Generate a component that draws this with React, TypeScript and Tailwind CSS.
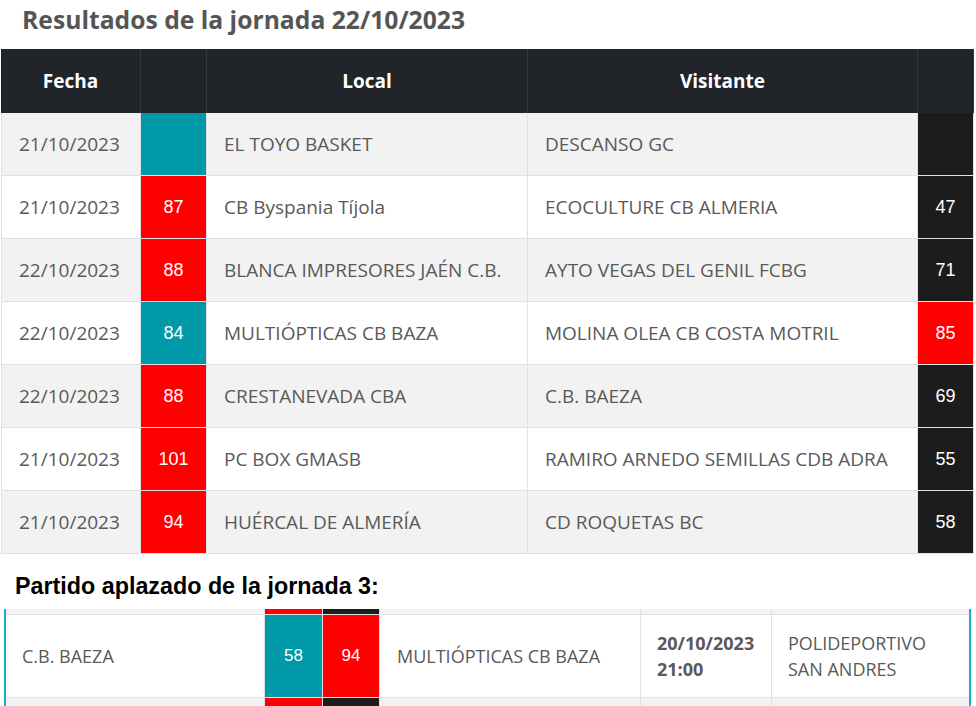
import React from 'react'

type Tone = 'teal' | 'red' | 'black'

interface Match {
  date: string
  localScore?: number
  local: string
  visitor: string
  visitorScore?: number
  localTone: Tone
  visitorTone: Tone
}

const toneClass: Record<Tone, string> = {
  teal: 'bg-[#0099a8]',
  red: 'bg-[#ff0000]',
  black: 'bg-[#1c1c1c]',
}

const matches: Match[] = [
  { date: '21/10/2023', local: 'EL TOYO BASKET', visitor: 'DESCANSO GC', localTone: 'teal', visitorTone: 'black' },
  { date: '21/10/2023', localScore: 87, local: 'CB Byspania Tíjola', visitor: 'ECOCULTURE CB ALMERIA', visitorScore: 47, localTone: 'red', visitorTone: 'black' },
  { date: '22/10/2023', localScore: 88, local: 'BLANCA IMPRESORES JAÉN C.B.', visitor: 'AYTO VEGAS DEL GENIL FCBG', visitorScore: 71, localTone: 'red', visitorTone: 'black' },
  { date: '22/10/2023', localScore: 84, local: 'MULTIÓPTICAS CB BAZA', visitor: 'MOLINA OLEA CB COSTA MOTRIL', visitorScore: 85, localTone: 'teal', visitorTone: 'red' },
  { date: '22/10/2023', localScore: 88, local: 'CRESTANEVADA CBA', visitor: 'C.B. BAEZA', visitorScore: 69, localTone: 'red', visitorTone: 'black' },
  { date: '21/10/2023', localScore: 101, local: 'PC BOX GMASB', visitor: 'RAMIRO ARNEDO SEMILLAS CDB ADRA', visitorScore: 55, localTone: 'red', visitorTone: 'black' },
  { date: '21/10/2023', localScore: 94, local: 'HUÉRCAL DE ALMERÍA', visitor: 'CD ROQUETAS BC', visitorScore: 58, localTone: 'red', visitorTone: 'black' },
]

const openSans = "font-['Open_Sans',sans-serif]"
const arial = "font-['Liberation_Sans',Arial,sans-serif]"
const topCols = 'grid grid-cols-[140px_66px_321px_390px_56px]'
const bottomCols = 'grid grid-cols-[259px_58px_57px_261px_131px_197px]'

function ScoreCell({ tone, value }: { tone: Tone; value?: number }) {
  return (
    <div
      className={`flex items-center justify-center border-r border-[#dee2e6] text-[18px] text-white ${arial} ${toneClass[tone]}`}
    >
      {value}
    </div>
  )
}

function ResultsTable() {
  return (
    <div className={`ml-px w-[973px] ${openSans}`}>
      <div className={`${topCols} h-[64px] bg-[#212529] text-[19px] font-bold text-white`}>
        <div className="flex items-center justify-center border-r border-[#32383e]">Fecha</div>
        <div className="border-r border-[#32383e]" />
        <div className="flex items-center justify-center border-r border-[#32383e]">Local</div>
        <div className="flex items-center justify-center border-r border-[#32383e]">Visitante</div>
        <div className="border-r border-[#32383e]" />
      </div>
      {matches.map((m, i) => (
        <div
          key={i}
          className={`${topCols} h-[63px] border-b border-[#dee2e6] text-[19px] text-[#595959] ${
            i % 2 === 0 ? 'bg-[#f2f2f2]' : 'bg-white'
          }`}
        >
          <div className="flex items-center border-x border-[#dee2e6] pl-[17px]">{m.date}</div>
          <ScoreCell tone={m.localTone} value={m.localScore} />
          <div className="flex items-center border-r border-[#dee2e6] pl-[17px]">{m.local}</div>
          <div className="flex items-center border-r border-[#dee2e6] pl-[17px]">{m.visitor}</div>
          <ScoreCell tone={m.visitorTone} value={m.visitorScore} />
        </div>
      ))}
    </div>
  )
}

function StripRow({ height }: { height: string }) {
  return (
    <div className={`${bottomCols} ${height} bg-[#f2f2f2]`}>
      <div className="border-r border-[#dee2e6]" />
      <div className="border-r border-[#dee2e6] bg-[#ff0000]" />
      <div className="border-r border-[#dee2e6] bg-[#1c1c1c]" />
      <div className="border-r border-[#dee2e6]" />
      <div className="border-r border-[#dee2e6]" />
      <div />
    </div>
  )
}

function PostponedTable() {
  return (
    <div className={`ml-[4px] w-[967px] overflow-hidden border-x-2 border-[#1ab0c4] ${openSans}`}>
      <div className="border-b border-[#dee2e6]">
        <StripRow height="h-[5px]" />
      </div>
      <div className={`${bottomCols} h-[83px] border-b border-[#dee2e6] bg-white text-[18px] text-[#595959]`}>
        <div className="flex items-center border-r border-[#dee2e6] pl-[16px]">C.B. BAEZA</div>
        <div className={`flex items-center justify-center border-r border-[#dee2e6] bg-[#0099a8] text-[17px] text-white ${arial}`}>
          58
        </div>
        <div className={`flex items-center justify-center border-r border-[#dee2e6] bg-[#ff0000] text-[17px] text-white ${arial}`}>
          94
        </div>
        <div className="flex items-center border-r border-[#dee2e6] pl-[17px]">MULTIÓPTICAS CB BAZA</div>
        <div className="flex flex-col justify-center border-r border-[#dee2e6] pl-[16px] font-bold leading-[26px]">
          <span>20/10/2023</span>
          <span>21:00</span>
        </div>
        <div className="flex flex-col justify-center pl-[16px] leading-[26px]">
          <span>POLIDEPORTIVO</span>
          <span>SAN ANDRES</span>
        </div>
      </div>
      <StripRow height="h-[9px]" />
    </div>
  )
}

export default function App() {
  return (
    <div className="h-[706px] w-[976px] overflow-hidden bg-white">
      <h2 className={`h-[49px] pl-[22px] pt-[4px] text-[24.7px] font-bold leading-[31px] text-[#555] ${openSans}`}>
        Resultados de la jornada 22/10/2023
      </h2>
      <ResultsTable />
      <h3 className={`h-[55px] pl-[15px] pt-[19px] text-[23.3px] font-bold leading-[26px] text-black ${arial}`}>
        Partido aplazado de la jornada 3:
      </h3>
      <PostponedTable />
    </div>
  )
}
